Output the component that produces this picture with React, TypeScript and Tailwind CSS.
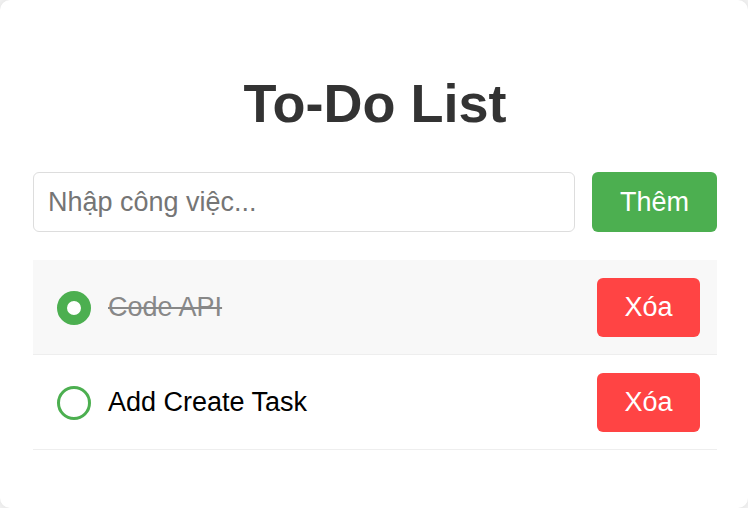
import { useState } from "react";

type Task = { id: number; text: string; done: boolean };

const initialTasks: Task[] = [
  { id: 1, text: "Code API", done: true },
  { id: 2, text: "Add Create Task", done: false },
];

export default function App() {
  const [tasks, setTasks] = useState<Task[]>(initialTasks);
  const [value, setValue] = useState("");

  const addTask = () => {
    if (!value.trim()) return;
    setTasks([...tasks, { id: Date.now(), text: value.trim(), done: false }]);
    setValue("");
  };

  const toggle = (id: number) =>
    setTasks(tasks.map(t => (t.id === id ? { ...t, done: !t.done } : t)));

  const remove = (id: number) => setTasks(tasks.filter(t => t.id !== id));

  return (
    <div className="min-h-screen bg-[#f4f4f4] font-['Liberation_Sans',Arial,sans-serif]">
      <div className="h-[508px] w-[748px] rounded-[10px] bg-white pl-[33px] pr-[31px] pt-[72px] shadow-[0_0_10px_rgba(0,0,0,0.1)]">
        <h1 className="mb-[38px] text-center text-[54px] font-bold leading-[62px] text-[#333]">To-Do List</h1>

        {/* Input row */}
        <div className="flex gap-[17px]">
          <input
            value={value}
            onChange={e => setValue(e.target.value)}
            onKeyDown={e => e.key === "Enter" && addTask()}
            placeholder="Nhập công việc..."
            className="h-[60px] flex-1 rounded-[6px] border border-[#ddd] px-[14px] text-[27px] text-[#333] outline-none placeholder:text-[#757575]"
          />
          <button
            onClick={addTask}
            className="h-[60px] w-[125px] rounded-[6px] bg-[#4caf50] text-[27px] text-white"
          >
            Thêm
          </button>
        </div>

        {/* Task list */}
        <ul className="mt-[28px]">
          {tasks.map(t => (
            <li
              key={t.id}
              className={`flex items-center border-b border-[#eee] pb-[17px] pt-[18px] pl-[24px] pr-[17px] ${t.done ? "bg-[#f8f8f8]" : ""}`}
            >
              <button
                onClick={() => toggle(t.id)}
                className={`h-[34px] w-[34px] shrink-0 rounded-full border-[#4caf50] bg-white ${t.done ? "border-[10px]" : "border-[3px]"}`}
                aria-label="Toggle"
              />
              <span
                className={`ml-[17px] flex-1 text-[27px] ${t.done ? "text-[#888] line-through" : "text-black"}`}
              >
                {t.text}
              </span>
              <button
                onClick={() => remove(t.id)}
                className="h-[59px] w-[103px] rounded-[6px] bg-[#ff4444] text-[27px] text-white"
              >
                Xóa
              </button>
            </li>
          ))}
        </ul>
      </div>
    </div>
  );
}
